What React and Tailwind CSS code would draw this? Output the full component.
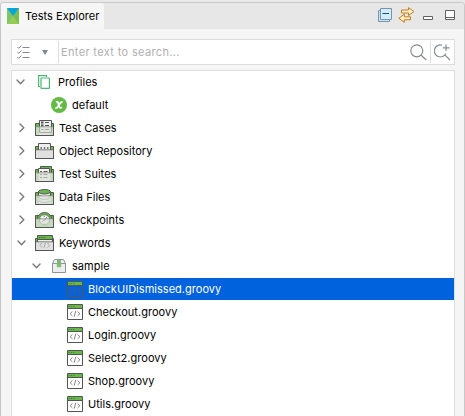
import React from 'react';

function Chevron({ open }) {
  return (
    <svg className="h-[10px] w-[9px] shrink-0" viewBox="0 0 9 10" fill="none" stroke="#7b7b7b" strokeWidth="1.4" strokeLinecap="round" strokeLinejoin="round">
      <path d={open ? 'M1 3 4.5 6.8 8 3' : 'M3 1 6.8 4.7 3 8.4'} />
    </svg>
  );
}

function FolderIcon({ kind }) {
  const tinted = kind === 'cases' || kind === 'suites' || kind === 'data' || kind === 'checks';
  return (
    <svg className="h-4 w-[19px] shrink-0" viewBox="0 0 19 16" fill="none">
      <path d="M.5 3.5H18.5V15.5H.5Z" fill="#65b946" stroke="#555" />
      {kind === 'cases' && (
        <g>
          <path d="M4.5.5H16.5V10H4.5Z" fill="#eee" stroke="#555" />
          <path d="M10 2.5H14M10 5.5H14" stroke="#555" />
          <path d="M6 2.5H8.5M6 5.5H8.5" stroke="#555" strokeWidth="1.8" />
        </g>
      )}
      {kind === 'objects' && (
        <g>
          <path d="M3.5.5H15.5V10H3.5Z" fill="#eee" stroke="#555" />
          <path d="M5.5 5H7M8.8 5H10.3M12 5H13.5" stroke="#555" strokeWidth="1.5" />
        </g>
      )}
      {kind === 'suites' && (
        <g>
          <path d="M5.5.5H16.5V10H5.5Z" fill="#65b946" stroke="#555" />
          <path d="M3.5 2.5H14.5V12H3.5Z" fill="#f3f3f3" stroke="#555" />
          <path d="M5 5.5H7M8.5 5.5H12.5" stroke="#555" />
        </g>
      )}
      {kind === 'data' && (
        <g>
          <path d="M3.5 2.5V12H15.5V2.5" fill="#e5e5e5" stroke="#555" />
          <ellipse cx="9.5" cy="2.7" rx="6" ry="2.2" fill="#65b946" stroke="#555" />
          <path d="M3.5 6C5.8 8.3 13.2 8.3 15.5 6" stroke="#666" />
        </g>
      )}
      {kind === 'checks' && (
        <g>
          <circle cx="9.5" cy="8" r="7.5" fill="#65b946" stroke="#555" />
          <circle cx="9.5" cy="8" r="5.3" fill="#f2f2f2" stroke="#666" strokeWidth=".7" />
          <path d="m8.8 8.4 3.4-3.3M5.3 6.4l1 .6M9.3 3.7V5" stroke="#777" />
        </g>
      )}
      {kind === 'keywords' && (
        <g>
          <path d="M2.5.5H17.5V10H2.5Z" fill="#65b946" stroke="#555" />
          <path d="M3 5H17V9H3Z" fill="#eee" />
          <path d="M3 4.5H17" stroke="#555" />
          <path d="M4 2.5H5.3M6.3 2.5H7.6M8.6 2.5H9.9" stroke="#456e39" />
        </g>
      )}
      <path d="M1 7H18V15H1Z" fill={tinted ? '#c5d9bd' : '#e0e0e0'} />
      {(kind === 'cases' || kind === 'suites' || kind === 'data') && <path d="M4 7H15.5V15H4Z" fill="#e1e4df" />}
      {kind === 'cases' && <path d="M4.5 7V12.5H16.5V7M6 9.5H8.5M10 9.5H14" stroke="#a4aba1" />}
      {kind === 'suites' && <path d="M5 8.5H7M8.5 8.5H12.5M5 11.5H7M8.5 11.5H12.5" stroke="#a4aba1" />}
      {kind === 'data' && <path d="M4 8.5C6 11 13 11 15 8.5M4 12C6 14 13 14 15 12" stroke="#bfc4bd" />}
      {kind === 'checks' && <path d="M4.3 7C4 14.5 15 14.5 14.7 7" fill="#e2e5e0" stroke="#b6bcb4" />}
      {kind === 'checks' && <path d="M8 9.5 10.5 7" stroke="#999" />}
      {kind === 'keywords' && <path d="m6.8 8-2 2.3 2 2.2M12.5 8l2 2.3-2 2.2M10.5 7.8l-1.7 5" stroke="#aaa" />}
      <path d="M.5 6V15.5H18.5V6" stroke="#555" />
      <path d="M1 6.8H18" stroke={kind === 'objects' || kind === 'keywords' ? '#666' : '#8a9486'} strokeWidth=".8" />
    </svg>
  );
}

function ScriptIcon({ selected }) {
  const line = selected ? '#38608f' : '#777';
  return (
    <svg className="h-4 w-4 shrink-0" viewBox="0 0 16 16" fill="none">
      <path d="M.5.5H15.5V15.5H.5Z" fill={selected ? '#0b60d4' : '#fff'} stroke="#555" />
      <path d="M1 1H15V4H1Z" fill="#65b946" />
      <path d="M1 4.5H15" stroke="#555" />
      <path d="M1.5 2.5H2.7M3.8 2.5H5M6.1 2.5H7.3" stroke="#4d7940" />
      <path d="m5.4 7.5-2.3 2.2 2.3 2.2M10.6 7.5l2.3 2.2-2.3 2.2M8.8 6.8l-1.6 5.8" stroke={line} strokeWidth=".9" />
    </svg>
  );
}

function ProfilesIcon() {
  return (
    <svg className="ml-1 mr-[3px] h-[14px] w-3 shrink-0" viewBox="0 0 12 14" fill="none" stroke="#4eb875" strokeWidth="1.2">
      <path d="M2 11.5H.6V.6H8.5V2" />
      <rect x="3" y="3" width="8.4" height="10.4" rx=".5" />
    </svg>
  );
}

function DefaultIcon() {
  return (
    <svg className="h-4 w-4 shrink-0" viewBox="0 0 16 16">
      <circle cx="8" cy="8" r="8" fill="#63bb46" />
      <path d="M5 5.2C7 4 7.2 5.4 7.7 7.8S8.8 11.7 10.9 10.3M11.6 5.2C9.9 4.3 8.6 6.7 7.7 8.3S5.9 11.6 4.3 10.7" fill="none" stroke="#fff" strokeWidth="1.8" />
    </svg>
  );
}

function PackageIcon() {
  return (
    <svg className="h-[14px] w-[14px] shrink-0" viewBox="0 0 14 14" fill="none">
      <path d="M.5 4.5 2.5.5H11.5L13.5 4.5V13.5H.5Z" fill="#eceef0" stroke="#8d959e" />
      <path d="M.5 4.5H13.5" stroke="#8d959e" />
      <path d="M5 1H9V8H5Z" fill="#7bc260" />
      <path d="M7 .5V5" stroke="#8d959e" />
      <path d="M5 4.5V8H9V4.5" stroke="#a2bd99" strokeWidth=".6" />
    </svg>
  );
}

function Group({ kind, open, label }) {
  return (
    <div className="flex h-[23px] shrink-0 items-center pb-px pl-[5px]">
      <Chevron open={open} />
      <div className="ml-[9px]"><FolderIcon kind={kind} /></div>
      <span className="ml-[5px]">{label}</span>
    </div>
  );
}

function Script({ label, selected }) {
  return (
    <div className={selected ? 'mb-px flex h-[22px] shrink-0 items-center bg-[#0062dc] pl-[55px] text-white' : 'flex h-[23px] shrink-0 items-center pb-px pl-[55px]'}>
      <ScriptIcon selected={selected} />
      <span className="ml-[5px]">{label}</span>
    </div>
  );
}

function SearchIcon({ add }) {
  return (
    <svg className="h-[17px] w-[17px] shrink-0" viewBox="0 0 17 17" fill="none" stroke="#868c94" strokeWidth="1.2">
      {add ? <path d="M8 1.2A6 6 0 1 0 11.8 9.5M10.8 10.8 16 16M12 .5V7M8.8 3.8H15.5" /> : <><circle cx="6.8" cy="6.8" r="6" /><path d="m11.2 11.2 5 4.8" /></>}
    </svg>
  );
}

export default function App() {
  return (
    <div className="flex h-[416px] w-[465px] flex-col overflow-hidden bg-[#e8e8e8] pt-[2px] font-['Inter',sans-serif] text-[11px] leading-[16px] tracking-[0.03px] text-black">
      <div className="flex min-h-0 flex-1 flex-col rounded-t-[4px] border-x border-t border-[#c8c8c8] bg-[#f5f5f5]">
        <header className="flex h-[26px] shrink-0 overflow-hidden rounded-t-[3px] bg-[#e7e7e7]">
          <div className="flex w-[103px] items-center rounded-tr-[2px] bg-[#f6f6f6] pl-[6px]">
            <svg className="h-4 w-3 shrink-0" viewBox="0 0 12 16">
              <path d="M0 0H12V16H0Z" fill="#96cb58" />
              <path d="M12 0V16L6 8Z" fill="#79be50" />
              <path d="M0 0 6 8 0 16Z" fill="#7dc46b" />
              <path d="M0 0H12L6 8Z" fill="#00a5dc" />
            </svg>
            <span className="ml-[6px] whitespace-nowrap">Tests Explorer</span>
          </div>
          <div className="ml-auto flex h-full items-center pb-[2px] pr-[9px]">
            <svg className="h-[14px] w-[14px]" viewBox="0 0 14 14" fill="none">
              <path d="M.5 2.5H11.5V13.5H.5Z" fill="#cbe5ef" stroke="#7892b6" />
              <path d="M2.5.5H13.5V11.5H2.5Z" fill="#d1edf4" stroke="#7892b6" />
              <path d="M4.5 5.5H11" stroke="#164e83" strokeWidth="1.2" />
            </svg>
            <svg className="ml-[6px] h-4 w-[17px]" viewBox="0 0 17 16" fill="#fff0c8" stroke="#c57b1b" strokeLinejoin="round">
              <path d="M3.5 3H10.5V.6L16 4.5l-5.5 4V6H3.5Z" />
              <path d="M12.5 9.8H6.3V7.2L.8 11.3l5.5 4V12.8h6.2Z" />
            </svg>
            <svg className="ml-2 mt-[6px] h-1 w-[10px]" viewBox="0 0 10 4"><path d="M.5.5H9.5V3.5H.5Z" fill="white" stroke="#626262" /></svg>
            <svg className="ml-3 h-[10px] w-[10px]" viewBox="0 0 10 10"><path d="M.5.5H9.5V9.5H.5ZM.5 7.5H9.5" fill="white" stroke="#626262" /></svg>
          </div>
        </header>
        <section className="ml-[10px] mr-[9px] mt-[10px] flex h-[26px] shrink-0 items-center border border-[#dcdcdc] bg-white">
          <svg className="ml-[5px] h-[15px] w-[13px]" viewBox="0 0 13 15" fill="none" stroke="#858a91">
            <path d="M5.5 2.5H12.5M5.5 7.5H12.5M5.5 12.5H12.5M.4 2l1.3 1.3L4.6.6M.4 7l1.3 1.3 2.9-2.7M.4 12l1.3 1.3 2.9-2.7" />
          </svg>
          <svg className="ml-3 h-[5px] w-[6px]" viewBox="0 0 6 5"><path d="M0 0H6L3 5Z" fill="#7d858f" /></svg>
          <div className="ml-[10px] h-[22px] w-px bg-[#dedede]" />
          <span className="ml-[2px] flex-1 tracking-[0.35px] text-[#b0b0b0]">Enter text to search...</span>
          <SearchIcon />
          <div className="ml-[3px] mr-[3px] h-[22px] w-px bg-[#dedede]" />
          <div className="mr-[3px]"><SearchIcon add /></div>
        </section>
        <main className="ml-[10px] mr-[9px] mt-[5px] flex min-h-0 flex-1 flex-col overflow-hidden whitespace-nowrap border-x border-t border-[#dedede] bg-white">
          <div className="flex h-[23px] shrink-0 items-center pb-px pl-[4px]">
            <Chevron open /><div className="ml-[9px]"><ProfilesIcon /></div><span className="ml-[5px]">Profiles</span>
          </div>
          <div className="flex h-[23px] shrink-0 items-center pb-px pl-[39px]"><DefaultIcon /><span className="ml-[5px]">default</span></div>
          <Group kind="cases" label="Test Cases" />
          <Group kind="objects" label="Object Repository" />
          <Group kind="suites" label="Test Suites" />
          <Group kind="data" label="Data Files" />
          <Group kind="checks" label="Checkpoints" />
          <Group kind="keywords" label="Keywords" open />
          <div className="flex h-[23px] shrink-0 items-center pb-px pl-5"><Chevron open /><div className="ml-[11px]"><PackageIcon /></div><span className="ml-[6px]">sample</span></div>
          <Script label="BlockUIDismissed.groovy" selected />
          <Script label="Checkout.groovy" />
          <Script label="Login.groovy" />
          <Script label="Select2.groovy" />
          <Script label="Shop.groovy" />
          <Script label="Utils.groovy" />
        </main>
      </div>
    </div>
  );
}
